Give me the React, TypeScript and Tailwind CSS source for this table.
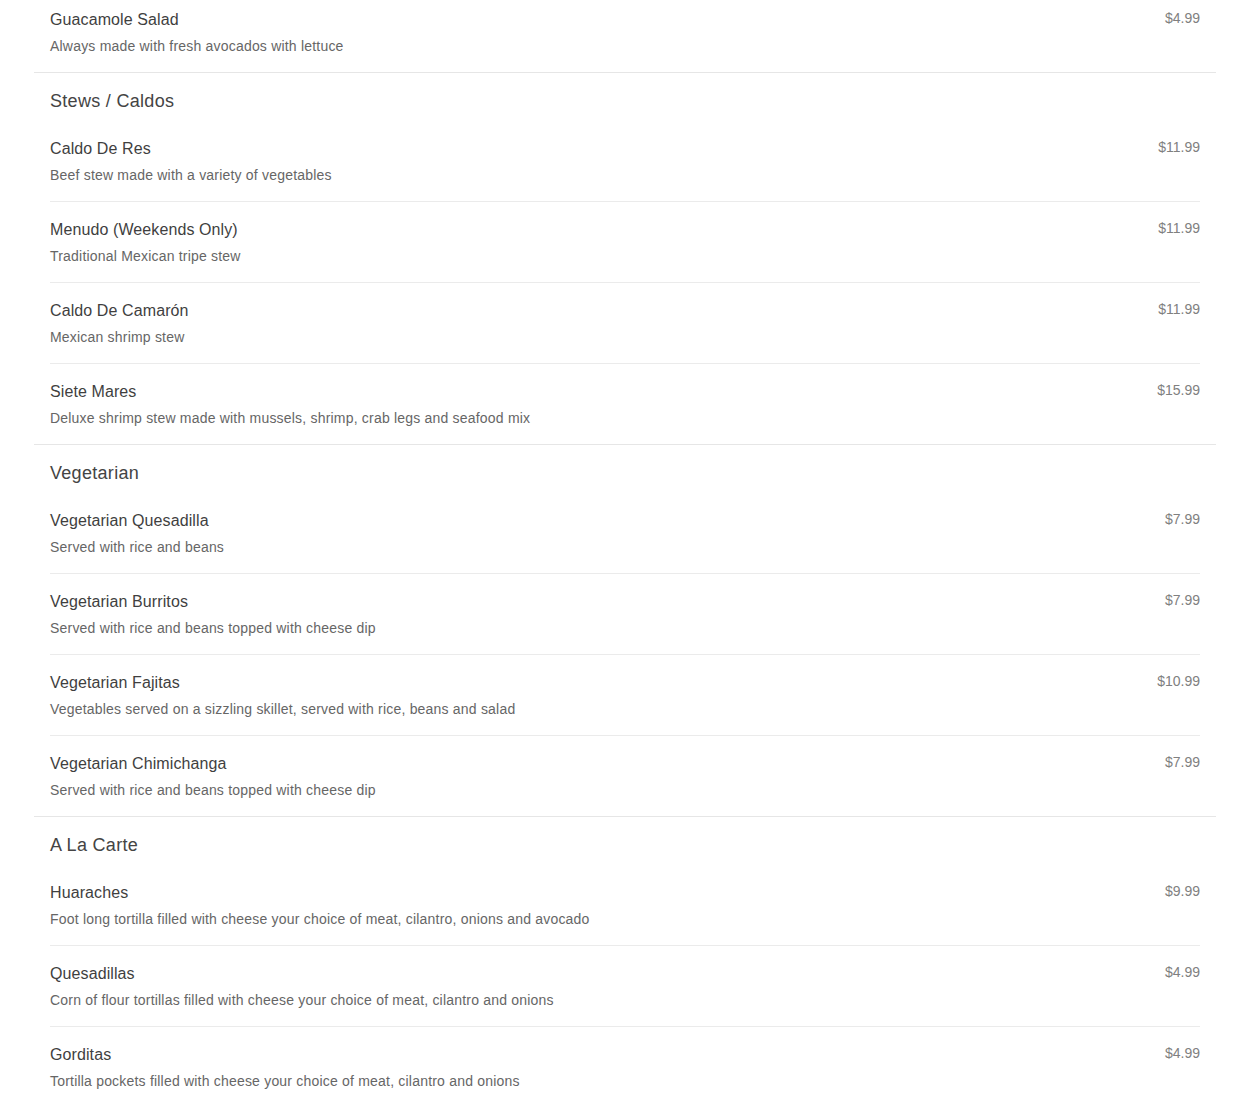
type Item = { name: string; desc: string; price: string };
type Section = { title?: string; items: Item[] };

const sections: Section[] = [
  {
    items: [
      { name: "Guacamole Salad", desc: "Always made with fresh avocados with lettuce", price: "$4.99" },
    ],
  },
  {
    title: "Stews / Caldos",
    items: [
      { name: "Caldo De Res", desc: "Beef stew made with a variety of vegetables", price: "$11.99" },
      { name: "Menudo (Weekends Only)", desc: "Traditional Mexican tripe stew", price: "$11.99" },
      { name: "Caldo De Camarón", desc: "Mexican shrimp stew", price: "$11.99" },
      { name: "Siete Mares", desc: "Deluxe shrimp stew made with mussels, shrimp, crab legs and seafood mix", price: "$15.99" },
    ],
  },
  {
    title: "Vegetarian",
    items: [
      { name: "Vegetarian Quesadilla", desc: "Served with rice and beans", price: "$7.99" },
      { name: "Vegetarian Burritos", desc: "Served with rice and beans topped with cheese dip", price: "$7.99" },
      { name: "Vegetarian Fajitas", desc: "Vegetables served on a sizzling skillet, served with rice, beans and salad", price: "$10.99" },
      { name: "Vegetarian Chimichanga", desc: "Served with rice and beans topped with cheese dip", price: "$7.99" },
    ],
  },
  {
    title: "A La Carte",
    items: [
      { name: "Huaraches", desc: "Foot long tortilla filled with cheese your choice of meat, cilantro, onions and avocado", price: "$9.99" },
      { name: "Quesadillas", desc: "Corn of flour tortillas filled with cheese your choice of meat, cilantro and onions", price: "$4.99" },
      { name: "Gorditas", desc: "Tortilla pockets filled with cheese your choice of meat, cilantro and onions", price: "$4.99" },
    ],
  },
];

function MenuItem({ item, last }: { item: Item; last: boolean }) {
  return (
    <div className={`flex justify-between pt-4 pb-4 ${last ? "" : "border-b border-[#ebebeb]"}`}>
      <div className="flex flex-col">
        <div className="text-[16px] leading-[24px] text-[#3f3f3f] tracking-[0.1px]">{item.name}</div>
        <div className="mt-1 text-[14px] leading-[20px] text-[#666] tracking-[0.2px]">{item.desc}</div>
      </div>
      <div className="text-[14px] leading-[20px] text-[#808080]">{item.price}</div>
    </div>
  );
}

export default function App() {
  return (
    <div className="min-h-screen bg-white px-[34px] font-['Liberation_Sans',Arial,sans-serif] overflow-hidden">
      <div className="-mt-[8px]">
        {sections.map((section, i) => (
          <div key={i} className="border-b border-[#e6e6e6] px-4">
            {section.title && (
              <h2 className="pt-[15px] mb-[7px] text-[18px] leading-[26px] text-[#444] tracking-[0.3px]">
                {section.title}
              </h2>
            )}
            {section.items.map((item, j) => (
              <MenuItem key={item.name} item={item} last={j === section.items.length - 1} />
            ))}
          </div>
        ))}
      </div>
    </div>
  );
}
